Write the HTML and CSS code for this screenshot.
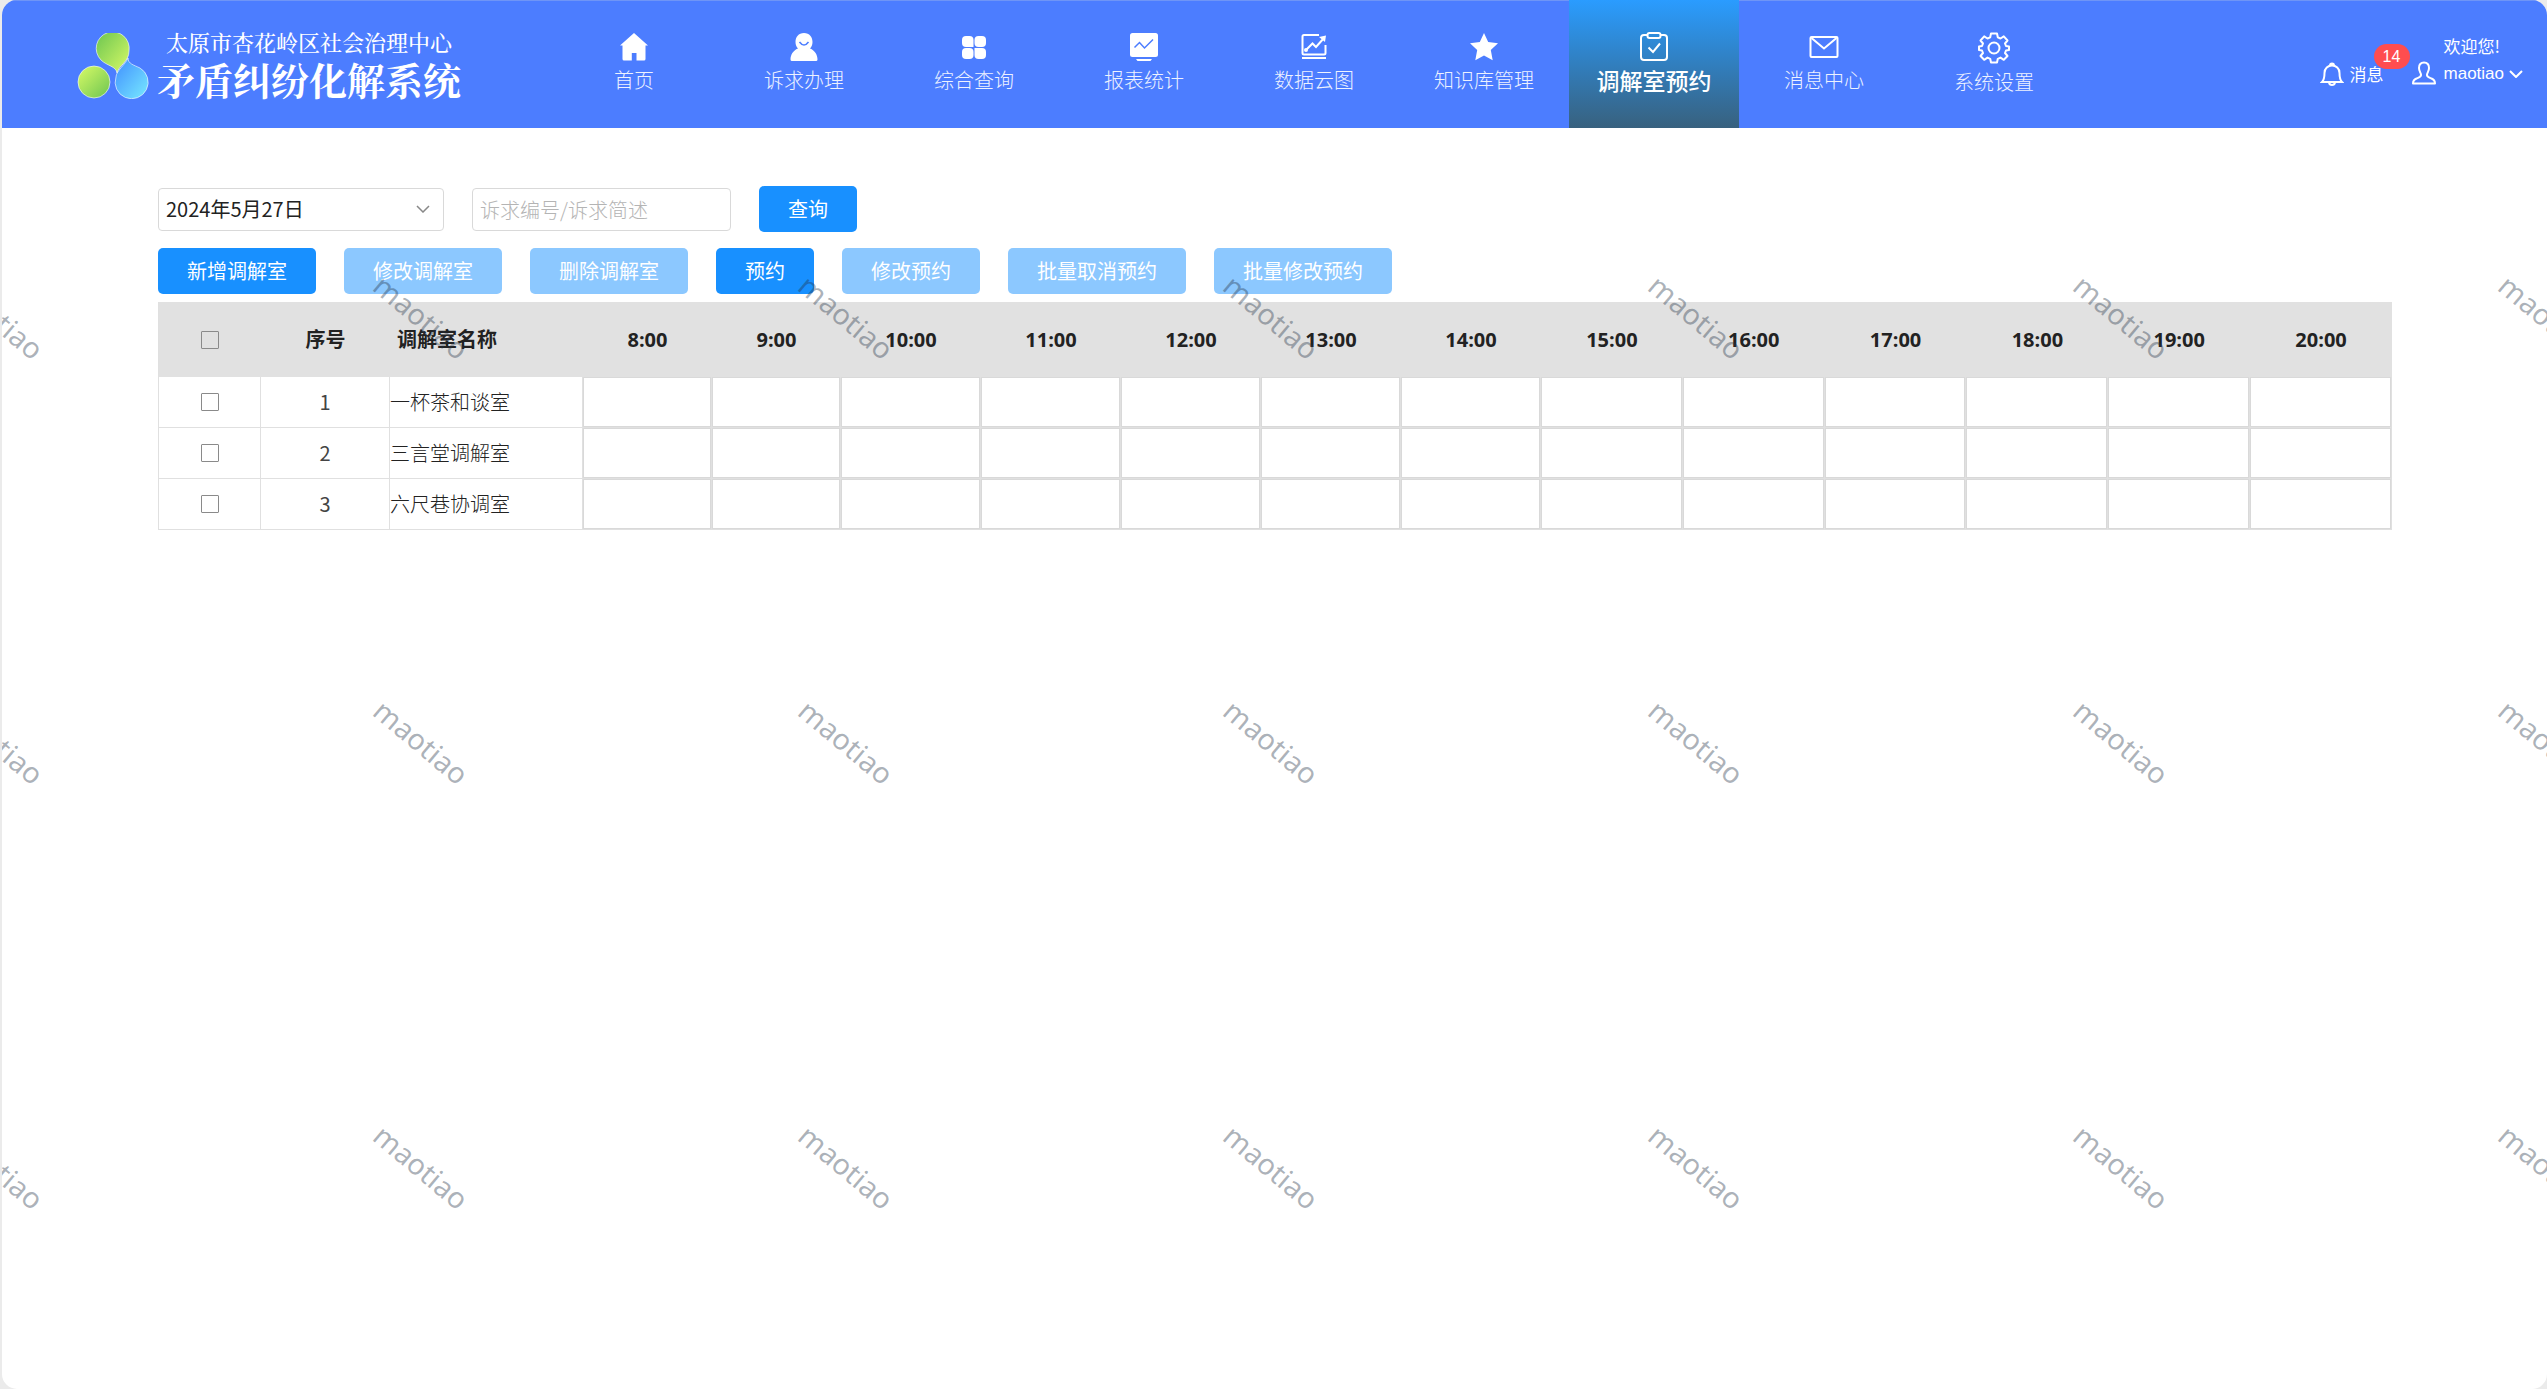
FILE: index.html
```html
<!DOCTYPE html>
<html lang="zh-CN">
<head>
<meta charset="utf-8">
<title>矛盾纠纷化解系统</title>
<link rel="stylesheet" href="styles.css">
</head>
<body>
<div class="frame">
  <header class="topbar">
    <div class="brand">
      <svg class="brand-mark" viewBox="0 0 72 66" aria-hidden="true">
        <defs>
          <linearGradient id="g1" x1="0" y1="0" x2="1" y2="1"><stop offset="0" stop-color="#6cc551"/><stop offset="1" stop-color="#d9fb66"/></linearGradient>
          <linearGradient id="g2" x1="0" y1="0" x2="1" y2="1"><stop offset="0" stop-color="#d9fb66"/><stop offset="1" stop-color="#6cc551"/></linearGradient>
          <linearGradient id="g3" x1="0" y1="0" x2="1" y2="1"><stop offset="0" stop-color="#3f8dff"/><stop offset="1" stop-color="#78eaff"/></linearGradient>
        </defs>
        <g stroke="#ffffff" stroke-opacity=".6">
          <path fill="url(#g3)" d="M51 25C51 31 57 32 63 35A16.500 16.500 0 1 1 39 44C39 38 49 31 51 25Z"/>
          <path fill="url(#g1)" d="M40 40C39 33 30 33 24 27A16.500 16.500 0 1 1 52 18C52 29 42 32 40 40Z"/>
          <circle cx="17" cy="49" r="16" fill="url(#g2)"/>
        </g>
      </svg>
      <div class="brand-text">
        <p class="brand-org">太原市杏花岭区社会治理中心</p>
        <h1 class="brand-name">矛盾纠纷化解系统</h1>
      </div>
    </div>
    <nav class="nav">
      <a class="nav-item" href="#"><svg class="icon" viewBox="0 0 30 30"><path fill="currentColor" d="M15 1 29 13.500H26.500V27Q26.500 28.500 25 28.500H17.500V21H12.800V28.500H5Q3.500 28.500 3.500 27V13.500H1Z"/></svg><span>首页</span></a>
      <a class="nav-item" href="#"><svg class="icon" viewBox="0 0 30 30"><path fill="currentColor" d="M15 1C20.500 1 23.500 5 23.500 10 23.500 13 22.500 15 21 16.500 26 18.500 28.500 23 28.500 27.500Q28.500 29 27 29H3Q1.500 29 1.500 27.500C1.500 23 4 18.500 9 16.500 7.500 15 6.500 13 6.500 10 6.500 5 9.500 1 15 1Z"/><path d="M10.500 10Q15 16 19.500 10" fill="none" stroke="#4c7dff" stroke-width="1.500"/></svg><span>诉求办理</span></a>
      <a class="nav-item" href="#"><svg class="icon" viewBox="0 0 30 30" fill="currentColor"><path d="M7 4H10.500Q14.500 4 14.500 8V15H7Q3 15 3 11V8Q3 4 7 4Z"/><path d="M19.500 4H23Q27 4 27 8V11Q27 15 23 15H19.500Q15.500 15 15.500 11V8Q15.500 4 19.500 4Z"/><path d="M7 16H10.500Q14.500 16 14.500 20V23Q14.500 27 10.500 27H7Q3 27 3 23V20Q3 16 7 16Z"/><path d="M15.500 16H23Q27 16 27 20V23Q27 27 23 27H19.500Q15.500 27 15.500 23Z"/></svg><span>综合查询</span></a>
      <a class="nav-item" href="#"><svg class="icon" viewBox="0 0 30 30"><rect x="1" y="1" width="28" height="24" rx="2.500" fill="currentColor"/><path d="M7 27H23L21.500 29H8.500Z" fill="currentColor"/><path d="M5.500 15.500 10.500 10.500 15.500 16 24 7.500" fill="none" stroke="#4c7dff" stroke-width="1.500"/></svg><span>报表统计</span></a>
      <a class="nav-item" href="#"><svg class="icon" viewBox="0 0 30 30" fill="none" stroke="currentColor" stroke-width="2"><path d="M20 3H5Q3.500 3 3.500 4.500V21Q3.500 22.500 5 22.500H25Q26.500 22.500 26.500 21V13M3 26H27"/><path d="M7 18 13.500 11.500 17 15 25 6"/><path d="M20 5 27 3.500 26 10Z" fill="currentColor" stroke="none"/><circle cx="7" cy="18" r="2" fill="currentColor" stroke="none"/></svg><span>数据云图</span></a>
      <a class="nav-item" href="#"><svg class="icon" viewBox="0 0 30 30"><path fill="currentColor" d="M15 1 19.200 10 29 11.200 21.800 18 23.700 28.300 15 23.500 6.300 28.300 8.200 18 1 11.200 10.800 10Z"/></svg><span>知识库管理</span></a>
      <a class="nav-item is-active" href="#"><svg class="icon" viewBox="0 0 30 30" fill="none" stroke="currentColor" stroke-width="2"><path d="M8.500 3H5Q2 3 2 6V25Q2 28 5 28H25Q28 28 28 25V6Q28 3 25 3H21.500"/><rect x="8.500" y="1" width="13" height="5" rx="2"/><path d="M9.500 15.500 14 20 21 11.500"/></svg><span>调解室预约</span></a>
      <a class="nav-item" href="#"><svg class="icon" viewBox="0 0 30 30" fill="none" stroke="currentColor" stroke-width="2"><rect x="1.500" y="5" width="27" height="20" rx="1"/><path d="M2.500 6 15 16.500 27.500 6"/></svg><span>消息中心</span></a>
      <a class="nav-item" href="#"><svg class="icon icon-gear" viewBox="0 0 32 32" fill="none" stroke="currentColor" stroke-width="2" stroke-linejoin="round"><path d="M13 1.500H19L19.800 5.300 22.500 6.500 25.800 4.400 29.500 8.500 27 11.500 28 14 31 14.500V18L28 18.500 27 21 29.500 24 25.800 27.800 22.500 25.600 19.800 26.800 19 30.500H13L12.200 26.800 9.500 25.600 6.200 27.800 2.500 24 5 21 4 18.500 1 18V14.500L4 14 5 11.500 2.500 8.500 6.200 4.400 9.500 6.500 12.200 5.300Z"/><circle cx="16" cy="16" r="5.500"/></svg><span>系统设置</span></a>
    </nav>
    <div class="account">
      <a class="messages" href="#">
        <svg class="icon-small" viewBox="0 0 24 24" fill="none" stroke="currentColor" stroke-width="2"><path d="M2 20C4 18 4.500 16 4.500 11 4.500 6.500 8 3.500 12 3.500S19.500 6.500 19.500 11C19.500 16 20 18 22 20ZM10 3.500Q10 1.500 12 1.500T14 3.500M9 20.500Q9.500 23 12 23T15 20.500"/></svg>
        <span>消息</span>
        <span class="badge">14</span>
      </a>
      <div class="user">
        <svg class="icon-small" viewBox="0 0 24 24" fill="none" stroke="currentColor" stroke-width="2" stroke-linejoin="round"><path d="M12 1.500C15.500 1.500 17 4 17 7 17 10 15.500 11.500 15 13.500 14.500 16 17 16.500 19.500 17.500 22 18.500 23 20 23 22.500H1C1 20 2 18.500 4.500 17.500 7 16.500 9.500 16 9 13.500 8.500 11.500 7 10 7 7 7 4 8.500 1.500 12 1.500Z"/></svg>
        <div class="user-text">
          <span>欢迎您!</span>
          <button class="user-menu" type="button">maotiao<svg class="chevron" viewBox="0 0 14 8" fill="none" stroke="currentColor" stroke-width="2"><path d="M1 1 7 7 13 1"/></svg></button>
        </div>
      </div>
    </div>
  </header>

  <main class="content">
    <form class="filters">
      <div class="select-wrap">
        <select class="field" aria-label="日期"><option>2024年5月27日</option></select>
        <svg class="chevron select-arrow" viewBox="0 0 14 8" fill="none" stroke="currentColor" stroke-width="1.500"><path d="M1 1 7 7 13 1"/></svg>
      </div>
      <input class="field search" type="text" placeholder="诉求编号/诉求简述" aria-label="诉求编号/诉求简述">
      <button class="btn" type="button">查询</button>
    </form>
    <div class="actions">
      <button class="btn" type="button">新增调解室</button>
      <button class="btn" type="button" disabled>修改调解室</button>
      <button class="btn" type="button" disabled>删除调解室</button>
      <button class="btn" type="button">预约</button>
      <button class="btn" type="button" disabled>修改预约</button>
      <button class="btn" type="button" disabled>批量取消预约</button>
      <button class="btn" type="button" disabled>批量修改预约</button>
    </div>
    <table class="schedule">
      <colgroup>
        <col class="c-check"><col class="c-index"><col class="c-room">
        <col class="c-early" span="2"><col class="c-mid" span="5"><col span="6">
      </colgroup>
      <thead>
        <tr>
          <th><input class="tick" type="checkbox" aria-label="全选"></th><th>序号</th><th class="room">调解室名称</th>
          <th>8:00</th><th>9:00</th><th>10:00</th><th>11:00</th><th>12:00</th><th>13:00</th><th>14:00</th><th>15:00</th><th>16:00</th><th>17:00</th><th>18:00</th><th>19:00</th><th>20:00</th>
        </tr>
      </thead>
      <tbody>
        <tr>
          <td><input class="tick" type="checkbox" aria-label="一杯茶和谈室"></td><td>1</td><td class="room">一杯茶和谈室</td>
          <td class="slot"></td><td class="slot"></td><td class="slot"></td><td class="slot"></td><td class="slot"></td><td class="slot"></td><td class="slot"></td><td class="slot"></td><td class="slot"></td><td class="slot"></td><td class="slot"></td><td class="slot"></td><td class="slot"></td>
        </tr>
        <tr>
          <td><input class="tick" type="checkbox" aria-label="三言堂调解室"></td><td>2</td><td class="room">三言堂调解室</td>
          <td class="slot"></td><td class="slot"></td><td class="slot"></td><td class="slot"></td><td class="slot"></td><td class="slot"></td><td class="slot"></td><td class="slot"></td><td class="slot"></td><td class="slot"></td><td class="slot"></td><td class="slot"></td><td class="slot"></td>
        </tr>
        <tr>
          <td><input class="tick" type="checkbox" aria-label="六尺巷协调室"></td><td>3</td><td class="room">六尺巷协调室</td>
          <td class="slot"></td><td class="slot"></td><td class="slot"></td><td class="slot"></td><td class="slot"></td><td class="slot"></td><td class="slot"></td><td class="slot"></td><td class="slot"></td><td class="slot"></td><td class="slot"></td><td class="slot"></td><td class="slot"></td>
        </tr>
      </tbody>
    </table>
  </main>

  <div class="watermark" aria-hidden="true">
    <div class="watermark-grid">
      <span>maotiao</span><span>maotiao</span><span>maotiao</span><span>maotiao</span><span>maotiao</span><span>maotiao</span><span>maotiao</span>
      <span>maotiao</span><span>maotiao</span><span>maotiao</span><span>maotiao</span><span>maotiao</span><span>maotiao</span><span>maotiao</span>
      <span>maotiao</span><span>maotiao</span><span>maotiao</span><span>maotiao</span><span>maotiao</span><span>maotiao</span><span>maotiao</span>
    </div>
  </div>
</div>
</body>
</html>
```
FILE: styles.css
```css
* { box-sizing: border-box; }

body {
  margin: 0;
  background: #ebebeb;
  font-family: "Noto Sans CJK SC", sans-serif;
  font-size: 20px;
  line-height: 28px;
  color: #444;
}

button, input, select { font: inherit; }

.frame {
  position: relative;
  min-height: 100vh;
  margin-left: 2px;
  border-radius: 15px;
  background: #fff;
  overflow: hidden;
}

/* Top bar */
.topbar {
  display: flex;
  height: 128px;
  background: #4c7dff;
  box-shadow: inset 0 1px #6f95f6;
  color: #fff;
}

.brand {
  display: flex;
  flex: none;
  width: 547px;
  padding: 26px 0 0 75px;
  gap: 8px;
}

.brand-mark { width: 72px; height: 66px; margin-top: 7px; }

.brand-text {
  font-family: "Noto Serif CJK SC", "Noto Sans CJK SC", serif;
  text-align: center;
}

.brand-org { margin: 0; font-size: 22px; font-weight: 500; line-height: 32px; }

.brand-name { margin: 0; font-size: 38px; line-height: 42px; font-weight: 700; }

.nav { display: flex; flex: 1; }

.nav-item {
  display: flex;
  flex-direction: column;
  align-items: center;
  gap: 4px;
  width: 170px;
  padding-top: 32px;
  color: #fff;
  text-decoration: none;
  white-space: nowrap;
}

.nav-item span { font-weight: 300; opacity: .9; }

.nav-item.is-active {
  background: linear-gradient(#2a9cff, #38617e);
}

.nav-item.is-active span { font-size: 23px; font-weight: 500; opacity: 1; }

.icon { width: 30px; height: 30px; }
.icon-gear { width: 32px; height: 32px; }
.icon-small { width: 24px; height: 24px; }

.account {
  display: flex;
  align-items: flex-start;
  gap: 28px;
  padding-right: 24px;
  font-size: 17px;
  line-height: 28px;
}

.messages {
  position: relative;
  display: flex;
  align-items: center;
  gap: 6px;
  margin-top: 60px;
  color: #fff;
  text-decoration: none;
}

.badge {
  position: absolute;
  top: -16px;
  right: -26px;
  width: 36px;
  height: 25px;
  border-radius: 13px;
  background: #ff4d4f;
  font: 16px/25px "Liberation Sans", sans-serif;
  text-align: center;
}

.user { display: flex; align-items: flex-end; gap: 8px; padding-top: 32px; }
.user .icon-small { margin-bottom: 3px; }

.user-text { display: flex; flex-direction: column; }

.user-menu {
  display: flex;
  align-items: center;
  gap: 5px;
  padding: 0;
  border: 0;
  background: none;
  color: #fff;
  font: 17px/28px "Liberation Sans", sans-serif;
}

.chevron { width: 14px; height: 8px; }

/* Filters and actions */
.content { padding: 58px 155px 0 156px; }

.filters { display: flex; align-items: center; gap: 28px; }

.select-wrap { position: relative; width: 286px; }

.field {
  display: block;
  width: 100%;
  height: 43px;
  padding: 0 7px;
  border: 1px solid #d9d9d9;
  border-radius: 4px;
  background: #fff;
  color: #222;
  appearance: none;
}

.select-arrow {
  position: absolute;
  top: 17px;
  right: 14px;
  color: #888;
}

.search { width: 259px; }
.search::placeholder { color: #b4b4b4; font-weight: 300; }

.btn {
  height: 46px;
  padding: 0 29px;
  border: 0;
  border-radius: 5px;
  background: #1890ff;
  color: #fff;
  white-space: nowrap;
}

.btn:disabled { background: #8cc8ff; color: #fff; }

.actions { display: flex; gap: 28px; margin: 16px 0 8px; }

/* Schedule */
.schedule {
  width: 100%;
  table-layout: fixed;
  border-collapse: separate;
  border-spacing: 0;
  border-left: 1px solid #e0e0e0;
}

.c-check { width: 102px; }
.c-index { width: 129px; }
.c-room { width: 193px; }
.c-early { width: 129px; }
.c-mid { width: 140px; }

.schedule th {
  height: 75px;
  padding: 0;
  background: #e1e1e1;
  color: #222;
  font-family: "Open Sans", "Noto Sans CJK SC", sans-serif;
  font-weight: 700;
}

.schedule td {
  height: 51px;
  padding: 0;
  border-right: 1px solid #e0e0e0;
  border-bottom: 1px solid #e0e0e0;
  text-align: center;
}

.schedule th.room { padding-left: 7px; text-align: left; }
.schedule td.room { text-align: left; font-weight: 300; color: #222; }

.schedule .slot { box-shadow: inset 0 0 0 1px #d9d9d9; }

.tick {
  display: block;
  width: 18px;
  height: 18px;
  margin: 0 auto;
  border: 1px solid #8a8a8a;
  border-radius: 1px;
  appearance: none;
}

/* Watermark */
.watermark {
  position: absolute;
  inset: 0;
  overflow: hidden;
  pointer-events: none;
}

.watermark-grid {
  display: grid;
  grid-template-columns: repeat(7, 425px);
  grid-auto-rows: 425px;
  place-items: center;
  margin: 104px 0 0 -218px;
}

.watermark span {
  color: rgba(35, 50, 70, .38);
  font: 29px/32px "Noto Sans", sans-serif;
  transform: rotate(40deg);
}
```
